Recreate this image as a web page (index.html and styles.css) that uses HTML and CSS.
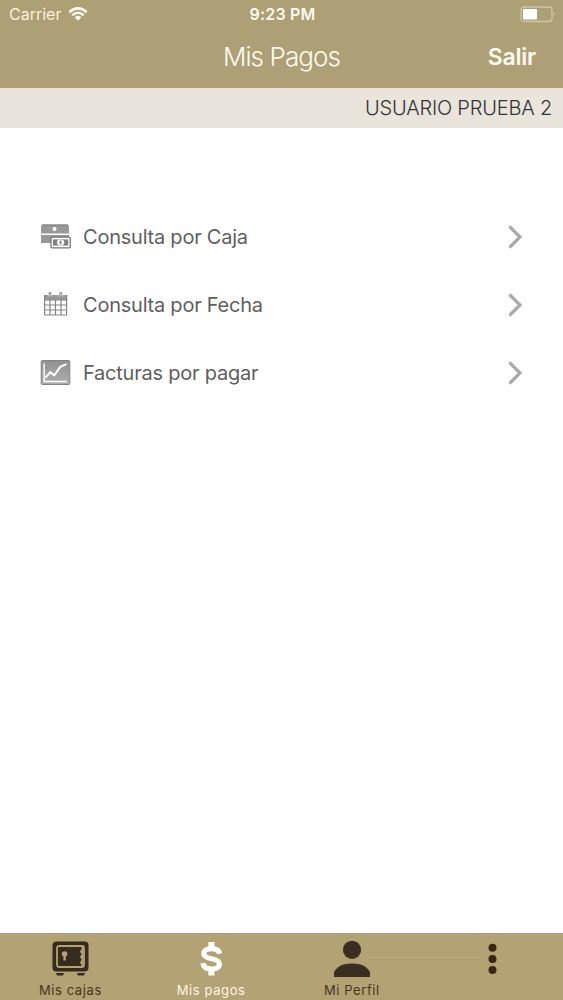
FILE: index.html
```html
<!DOCTYPE html>
<html lang="es">
<head>
    <meta charset="UTF-8">
    <meta name="viewport" content="width=device-width, initial-scale=1.0">
    <title>Mis Pagos</title>
    <link rel="stylesheet" href="styles.css">
</head>
<body>

<div class="app">
    <header class="header">
        <!-- Barra de estado -->
        <div class="status">
            <div class="status-left">
                <span class="carrier">Carrier</span>
                <svg class="wifi" width="20" height="14" viewBox="0 0 20 14">
                    <path d="M1.3 5.2Q10 -2.4 18.7 5.2M4.3 8.2Q10 3.3 15.7 8.2" fill="none" stroke="#fffaf0" stroke-width="2.5"/>
                    <path d="M6.6 10.3Q10 7.3 13.4 10.3L10 13.8Z" fill="#fffaf0"/>
                </svg>
            </div>
            <span class="time">9:23 PM</span>
            <svg class="battery" width="36" height="17" viewBox="0 0 36 17">
                <rect x="1" y="1" width="31" height="14.5" rx="3" fill="none" stroke="#d0c5a5" stroke-width="1.3"/>
                <rect x="3" y="3" width="14" height="10.5" rx="1" fill="#fff"/>
                <path d="M33.7 6Q36 8.2 33.7 10.5Z" fill="#d0c5a5"/>
            </svg>
        </div>
        <div class="nav">
            <h1 class="title">Mis Pagos</h1>
            <a class="logout">Salir</a>
        </div>
    </header>

    <div class="user">USUARIO PRUEBA 2</div>

    <!-- Opciones de pago -->
    <main class="menu">
        <a class="item">
            <svg class="icon" width="32" height="28" viewBox="0 0 32 28">
                <path d="M2 1.5H28L29 3.5V10.5H1V3.5ZM1 12H29V20H1Z" fill="#999"/>
                <path d="M2 2H28" stroke="#808080"/>
                <circle cx="14.5" cy="6" r="2" fill="#fff"/>
                <rect x="11" y="14.2" width="19.2" height="10.6" rx="1" fill="#fff" stroke="#777" stroke-width="1.3"/>
                <rect x="13" y="16.4" width="15.2" height="6.2" fill="#808080"/>
                <ellipse cx="20.6" cy="19.5" rx="3.7" ry="3.1" fill="#fff"/>
                <path d="M20.6 17.5V21.5" stroke="#808080" stroke-width="1.8"/>
            </svg>
            <span class="label">Consulta por Caja</span>
            <svg class="arrow" width="16" height="26" viewBox="0 0 16 26"><path d="M2.5 2.5L13 13L2.5 23.5"/></svg>
        </a>
        <a class="item">
            <svg class="icon" width="32" height="28" viewBox="0 0 32 28">
                <path d="M4 4H27.2V9H4Z" fill="#999"/>
                <path d="M4.6 4V24H26.6V4M4 9H27M4.6 14H26.6M4.6 19H26.6M10 9V24M15.5 9V24M21 9V24" fill="none" stroke="#858585" stroke-width="1.2"/>
                <path d="M10 1V5.5M20.7 1V5.5" stroke="#fff" stroke-width="4"/>
                <path d="M9 1.5H11V6H9ZM19.7 1.5H21.7V6H19.7Z" fill="#ccc" stroke="#888" stroke-width=".8"/>
            </svg>
            <span class="label">Consulta por Fecha</span>
            <svg class="arrow" width="16" height="26" viewBox="0 0 16 26"><path d="M2.5 2.5L13 13L2.5 23.5"/></svg>
        </a>
        <a class="item">
            <svg class="icon" width="32" height="28" viewBox="0 0 32 28">
                <defs>
                    <linearGradient id="gris" x2="0" y2="1"><stop stop-color="#929292"/><stop offset="1" stop-color="#adadad"/></linearGradient>
                </defs>
                <rect x="1.2" y="1.5" width="28.6" height="24" rx="1" fill="url(#gris)" stroke="#858585"/>
                <path d="M4.2 4.5V22.5H27" fill="none" stroke="#fff" stroke-width="1.4"/>
                <path d="M5.5 18.5L10.3 13.2L14.2 16.3L20.3 7.8L26.5 5.2" fill="none" stroke="#fff" stroke-width="2"/>
            </svg>
            <span class="label">Facturas por pagar</span>
            <svg class="arrow" width="16" height="26" viewBox="0 0 16 26"><path d="M2.5 2.5L13 13L2.5 23.5"/></svg>
        </a>
    </main>

    <!-- Pestañas -->
    <nav class="tabs">
        <a class="tab">
            <svg width="38" height="38" viewBox="0 0 38 38">
                <rect x="1.5" y="1.5" width="36" height="30" rx="4" fill="#352c1d"/>
                <rect x="6" y="6" width="27" height="21" rx="2" fill="none" stroke="#b3a273" stroke-width="1.8"/>
                <path d="M32 7H30.5V9.5A2.2 2.2 0 0 0 30.5 13.5V15A2.2 2.2 0 0 0 30.5 19V20.5A2.2 2.2 0 0 0 30.5 24.5V26H32Z" fill="#b3a273"/>
                <circle cx="13.6" cy="14" r="2.8" fill="#b3a273"/>
                <path d="M12.4 14H14.8V20.5H12.4Z" fill="#b3a273"/>
                <path d="M5 33H13L12 35.5H6ZM26 33H34L33 35.5H27Z" fill="#352c1d"/>
            </svg>
            <span>Mis cajas</span>
        </a>
        <a class="tab active">
            <svg width="38" height="38" viewBox="0 0 38 38">
                <path d="M28.3 13C27.5 9 24.2 7.3 19.2 7.3C14 7.3 10.7 9.4 10.7 12.7C10.7 16.3 14 17.5 19.2 18.6C24.3 19.6 28 20.8 28 24.6C28 28 24.5 30 19.2 30C13.6 30 10.2 27.8 9.6 23.6" fill="none" stroke="#fff" stroke-width="5.8" transform="translate(2.2 2) scale(.9)"/>
                <path d="M16.4 2H22.4V8H16.4ZM16.4 29H22.4V35.5H16.4Z" fill="#fff"/>
            </svg>
            <span>Mis pagos</span>
        </a>
        <a class="tab">
            <svg class="perfil" width="38" height="38" viewBox="0 0 38 38">
                <path d="M36 17.5H147" stroke="#bba97c"/>
                <circle cx="19" cy="9.8" r="9.1" fill="#3b2e20"/>
                <path d="M1 37V32.5C3 26.8 10 23.5 19 23.5S35 26.8 37 32.5V37Z" fill="#3b2e20"/>
            </svg>
            <span>Mi Perfil</span>
        </a>
        <a class="tab">
            <svg width="38" height="38" viewBox="0 0 38 38">
                <g fill="#3b2414"><circle cx="18.5" cy="7.8" r="4"/><circle cx="18.5" cy="18.9" r="4"/><circle cx="18.5" cy="30" r="4"/></g>
            </svg>
        </a>
    </nav>
</div>

</body>
</html>
```
FILE: styles.css
```css
body {
    font-family: Inter, Roboto, sans-serif;
    background-color: #fff;
    margin: 0;
}

.app {
    display: flex;
    flex-direction: column;
    height: 1000px;
    width: 563px;
    overflow: hidden;
}

.header {
    background-color: #ada075;
    color: #fffaf0;
    height: 88px;
}

.status {
    display: grid;
    grid-template-columns: 1fr auto 1fr;
    align-items: center;
    height: 28px;
    padding: 0 7px 0 9px;
}

.status-left {
    display: flex;
    align-items: center;
    gap: 7px;
}

.carrier {
    font-size: 16px;
    color: #fff0d9;
}

.time {
    font-size: 16px;
    font-weight: 600;
    letter-spacing: 0.2px;
}

.battery {
    justify-self: end;
}

.nav {
    display: grid;
    grid-template-columns: 1fr auto 1fr;
    align-items: center;
    height: 57px;
}

.title {
    grid-column: 2;
    font-size: 26px;
    font-weight: 300;
    letter-spacing: -0.9px;
    margin: 0;
}

.logout {
    justify-self: end;
    font-size: 23px;
    font-weight: 600;
    letter-spacing: -0.2px;
    padding: 1px 27px 0 0;
}

.user {
    background-color: #e9e5db;
    color: #333;
    font-size: 20px;
    font-weight: 300;
    letter-spacing: -0.2px;
    line-height: 40px;
    height: 40px;
    text-align: right;
    padding-right: 11px;
}

.menu {
    flex: 1;
    padding: 75px 40px 0;
}

.item {
    display: flex;
    align-items: center;
    height: 68px;
}

.label {
    flex: 1;
    color: #606060;
    font-size: 20px;
    letter-spacing: -0.23px;
    margin-left: 11px;
}

.arrow path {
    fill: none;
    stroke: #aaa;
    stroke-width: 3.2;
}

.tabs {
    display: grid;
    grid-template-columns: repeat(4, 1fr);
    background-color: #b3a273;
    border-top: 1px solid #a69a82;
    height: 66px;
}

.tab {
    display: flex;
    flex-direction: column;
    align-items: center;
    padding-top: 6px;
    color: #4a3522;
    font-size: 13px;
    letter-spacing: 0.6px;
}

.tab span {
    line-height: 16px;
    margin-top: 4px;
}

.perfil {
    overflow: visible;
}

.active {
    color: #fff5e3;
}
```
